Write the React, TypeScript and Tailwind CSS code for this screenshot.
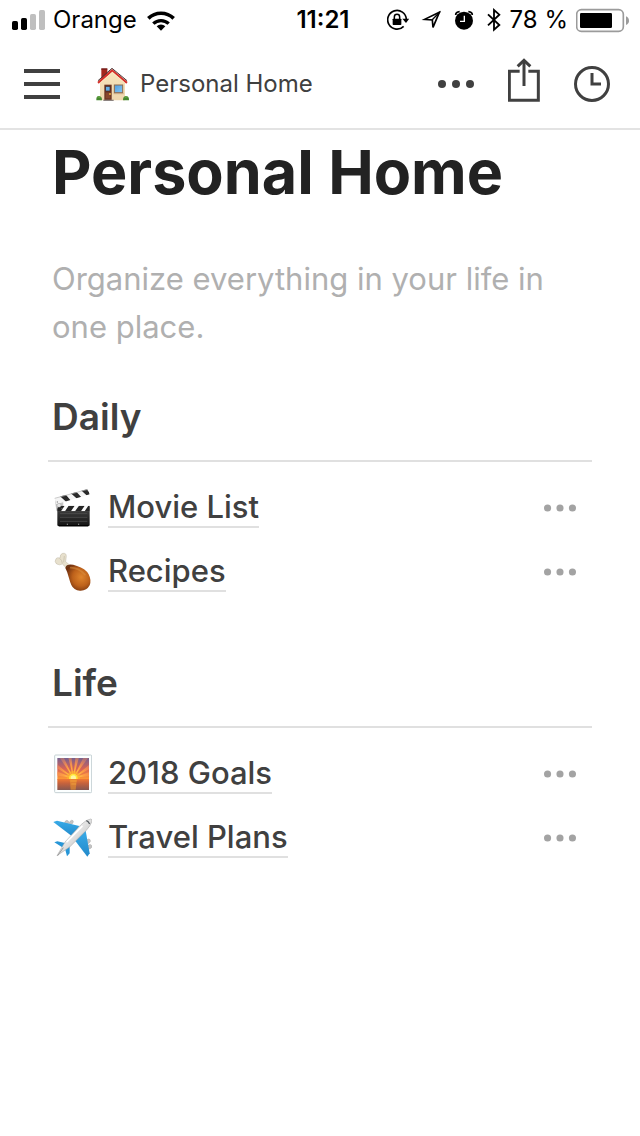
import type { ReactNode } from "react";

type Page = {
  title: string;
  icon: ReactNode;
};

type Section = {
  title: string;
  pages: Page[];
};

/* ---------- status bar icons ---------- */

function SignalIcon() {
  return (
    <svg viewBox="36 30 99 60" className="w-[33px] h-5">
      <rect x="36" y="63" width="18" height="27" rx="5" fill="#000" />
      <rect x="63" y="54" width="18" height="36" rx="5" fill="#000" />
      <rect x="90" y="42" width="18" height="48" rx="5" fill="#bfbfbf" />
      <rect x="117" y="30" width="18" height="60" rx="5" fill="#bfbfbf" />
    </svg>
  );
}

function WifiIcon() {
  return (
    <svg viewBox="441 28 84 63" className="w-7 h-[21px]">
      <path d="M483 90l-13-13a19 19 0 0 1 26 0z" fill="#000" />
      <g fill="none" stroke="#000" strokeWidth="10">
        <path d="M460 69a33 33 0 0 1 46 0" />
        <path d="M445 53a55 55 0 0 1 76 0" strokeWidth="11" />
      </g>
    </svg>
  );
}

function RotationLockIcon() {
  return (
    <svg viewBox="27 27 66 66" className="w-[22px] h-[22px]">
      <path d="M77 79A28 28 0 1 1 85 58" fill="none" stroke="#000" strokeWidth="5" />
      <path d="M73 56h21l-10 13z" fill="#000" />
      <rect x="44" y="56" width="26" height="19" rx="2" fill="#000" />
      <path d="M49 57v-6a8 8 0 0 1 16 0v6" fill="none" stroke="#000" strokeWidth="4.5" />
    </svg>
  );
}

function LocationIcon() {
  return (
    <svg viewBox="132 30 63 63" className="w-[21px] h-[21px]">
      <path
        d="M187 37L143 58l23 2 2 22z"
        fill="none"
        stroke="#000"
        strokeWidth="5"
        strokeLinejoin="miter"
      />
      <path d="M189 35L165 60" stroke="#000" strokeWidth="4" />
    </svg>
  );
}

function AlarmIcon() {
  return (
    <svg viewBox="229 30 60 60" className="w-5 h-5">
      <circle cx="259" cy="62" r="27" fill="#000" />
      <path d="M234 45q0-9 12-10M284 45q0-9-12-10" fill="none" stroke="#000" strokeWidth="5" />
      <path d="M260 47v17h-13" fill="none" stroke="#fff" strokeWidth="4" />
    </svg>
  );
}

function BluetoothIcon() {
  return (
    <svg viewBox="321 24 48 72" className="w-4 h-6">
      <path
        d="M327 43l34 32-16 14V30l16 14-34 32"
        fill="none"
        stroke="#000"
        strokeWidth="5.5"
      />
    </svg>
  );
}

function BatteryIcon() {
  return (
    <svg viewBox="588 24 174 75" className="w-[58px] h-[25px]">
      <rect x="590" y="29" width="140" height="65" rx="14" fill="#fff" stroke="#9b9b9b" strokeWidth="5" />
      <rect x="600" y="39" width="96" height="45" rx="4" fill="#000" />
      <path d="M738 49q9 4 9 13t-9 13z" fill="#9b9b9b" />
    </svg>
  );
}

/* ---------- header icons ---------- */

function MenuIcon() {
  return (
    <svg viewBox="0 0 36 30" className="w-9 h-[30px]" fill="currentColor">
      <rect y="0" width="36" height="4" />
      <rect y="13" width="36" height="4" />
      <rect y="26" width="36" height="4" />
    </svg>
  );
}

function DotsIcon({ className }: { className: string }) {
  return (
    <svg viewBox="0 0 36 8" className={className} fill="currentColor">
      <circle cx="4" cy="4" r="4" />
      <circle cx="18" cy="4" r="4" />
      <circle cx="32" cy="4" r="4" />
    </svg>
  );
}

function ShareIcon() {
  return (
    <svg viewBox="264 24 96 132" className="w-8 h-11" fill="none" stroke="currentColor" strokeWidth="9">
      <path d="M299 64H268V151H355V64H325" />
      <path d="M312 108V32" />
      <path d="M293 49l19-18 19 18" strokeWidth="9" />
    </svg>
  );
}

function ClockIcon() {
  return (
    <svg viewBox="462 48 108 108" className="w-9 h-9" fill="none" stroke="currentColor" strokeWidth="9">
      <circle cx="516" cy="102" r="49.5" />
      <path d="M516 69v33h27" />
    </svg>
  );
}

/* ---------- page icons ---------- */

function HouseIcon() {
  return (
    <svg viewBox="6 12 120 120" className="size-10 shrink-0">
      <defs>
        <linearGradient id="wall" x1="0" y1="0" x2="0" y2="1">
          <stop offset="0" stopColor="#f8e6bd" />
          <stop offset="1" stopColor="#eed6ad" />
        </linearGradient>
        <linearGradient id="pane" x1="0" y1="0" x2="1" y2="1">
          <stop offset="0" stopColor="#4e9ee0" />
          <stop offset="1" stopColor="#86c5f2" />
        </linearGradient>
      </defs>
      <path d="M34 26h18v24l-18 8z" fill="#a5281f" />
      <path d="M34 25h18v4H34z" fill="#6e1a17" />
      <path d="M30 64L67 31l38 33v57H30z" fill="url(#wall)" />
      <path d="M22 66L66 27l47 39-4 5-42-36-41 36z" fill="#d5322c" />
      <path d="M24 62L66 25l45 37" fill="none" stroke="#4b3937" strokeWidth="3" />
      <path d="M31 68l36-31 37 31" fill="none" stroke="#fff2cf" strokeWidth="2" />
      <rect x="43" y="74" width="22" height="46" fill="#6c3422" />
      <rect x="47" y="79" width="13" height="14" fill="#65aee6" stroke="#3e2724" strokeWidth="2" />
      <path d="M47 98h14v17H47z" fill="#87452b" />
      <circle cx="60" cy="102" r="3" fill="#e9b23f" />
      <rect x="73" y="75" width="25" height="23" fill="url(#pane)" stroke="#8a6b51" strokeWidth="3" />
      <path d="M71 101h30" stroke="#b99370" strokeWidth="2" />
      <path d="M40 121h31" stroke="#8c8380" strokeWidth="4" />
      <path d="M19 121q-1-14 9-13 8 1 8 13zM99 121q0-12 8-13 11 0 10 13z" fill="#45882f" />
      <path d="M23 113q3-5 8-1M104 113q4-5 8-1" fill="none" stroke="#76b54e" strokeWidth="3" />
    </svg>
  );
}

function ClapperIcon() {
  return (
    <svg viewBox="24 24 120 120" className="size-10 shrink-0">
      <defs>
        <linearGradient id="slate" x1="0" y1="0" x2="0" y2="1">
          <stop offset="0" stopColor="#484848" />
          <stop offset="1" stopColor="#121212" />
        </linearGradient>
        <clipPath id="topArm">
          <path d="M31 54L132 27l5 16L37 73z" />
        </clipPath>
        <clipPath id="lowArm">
          <path d="M40 77h97v17H40z" />
        </clipPath>
      </defs>
      <path d="M33 60l25 7-1 24-20 1z" fill="#c4c4c4" />
      <g clipPath="url(#topArm)">
        <path d="M28 20h115v60H28z" fill="#f4f4f4" />
        <path
          d="M45 46l22 20h17L63 41zM77 37l23 20h17L95 33zM108 28l22 20h15L125 24z"
          fill="#292929"
        />
      </g>
      <path d="M32 55L132 28" stroke="#b5b5b5" strokeWidth="2" />
      <rect x="40" y="78" width="97" height="61" rx="5" fill="url(#slate)" />
      <g clipPath="url(#lowArm)">
        <path d="M40 77h97v17H40z" fill="#fafafa" />
        <path d="M45 77h17L50 95H34zM74 77h18L80 95H62zM105 77h17l-12 18H92zM133 77h16l-12 18h-16z" fill="#252525" />
      </g>
      <path d="M48 101h82M48 112h82M48 124h82" stroke="#555" strokeWidth="2" />
      <path d="M70 131v7M104 131v7" stroke="#d1d1d1" strokeWidth="2" />
      <path d="M45 137h87" stroke="#000" strokeWidth="4" />
      <circle cx="45" cy="76" r="6" fill="#e4e4e4" stroke="#898989" />
      <circle cx="54" cy="86" r="2" fill="#777" />
      <circle cx="40" cy="66" r="2" fill="#888" />
    </svg>
  );
}

function DrumstickIcon() {
  return (
    <svg viewBox="24 30 120 120" className="size-10 shrink-0">
      <defs>
        <radialGradient id="meat" cx="0.63" cy="0.48" r="0.62">
          <stop offset="0" stopColor="#df852d" />
          <stop offset="0.55" stopColor="#bd611b" />
          <stop offset="1" stopColor="#70300f" />
        </radialGradient>
      </defs>
      <path
        d="M66 77L55 66q-9 5-17 0-8-7-2-16 4-5 12-2 0-12 8-14 11-2 11 9-1 9-2 16l12 10z"
        fill="#e7e0cd"
        stroke="#a89f88"
        strokeWidth="1"
      />
      <path d="M47 49q7 5 8 15M61 42l-2 19" fill="none" stroke="#cfc7b3" strokeWidth="3" />
      <path
        d="M64 78q2-10 12-10 8-1 23 4 25 7 35 25 9 18 3 33-9 17-29 16-19-1-26-17-4-9-8-24-3-14-10-27z"
        fill="url(#meat)"
      />
      <path d="M80 77q24 0 43 21" fill="none" stroke="#dc9142" strokeWidth="5" strokeLinecap="round" opacity="0.5" />
      <path d="M67 76l10-6" stroke="#6f3a1b" strokeWidth="4" />
    </svg>
  );
}

function SunriseIcon() {
  return (
    <svg viewBox="24 27 120 120" className="size-10 shrink-0">
      <defs>
        <linearGradient id="sky" x1="0" y1="0" x2="0" y2="1">
          <stop offset="0" stopColor="#75608f" />
          <stop offset="0.5" stopColor="#d76355" />
          <stop offset="1" stopColor="#ff9b32" />
        </linearGradient>
        <linearGradient id="sea" x1="0" y1="0" x2="0" y2="1">
          <stop offset="0" stopColor="#f07934" />
          <stop offset="0.4" stopColor="#c5623d" />
          <stop offset="1" stopColor="#865750" />
        </linearGradient>
        <radialGradient id="rays" gradientUnits="userSpaceOnUse" cx="88" cy="96" r="62">
          <stop offset="0" stopColor="#ffe94a" />
          <stop offset="0.5" stopColor="#ff9e43" />
          <stop offset="1" stopColor="#f48a5c" stopOpacity="0.4" />
        </radialGradient>
        <clipPath id="skyClip">
          <rect x="40" y="39" width="95" height="65" />
        </clipPath>
      </defs>
      <rect x="32" y="30" width="111" height="113" rx="3" fill="#fcffff" stroke="#c4d0d3" strokeWidth="3" />
      <rect x="40" y="39" width="95" height="65" fill="url(#sky)" />
      <g clipPath="url(#skyClip)">
        <path
          d="M88 99L30 90v-14zM88 99L30 64V50zM88 99L45 35h13zM88 99L71 30h11zM88 99L95 30h12zM88 99l32-65 12 5zM88 99l55-46v15zM88 99l55-20v13z"
          fill="url(#rays)"
        />
        <circle cx="88" cy="98" r="20" fill="#ffae31" opacity="0.7" />
        <circle cx="88" cy="99" r="13" fill="#ffe53b" />
        <circle cx="88" cy="99" r="8" fill="#fff6a2" />
      </g>
      <rect x="40" y="102" width="95" height="33" fill="url(#sea)" />
      <path d="M77 103h22l-4 31H80z" fill="#ed952d" opacity="0.6" />
      <path d="M79 108h19M82 117h14" stroke="#f7ac3f" strokeWidth="2" />
    </svg>
  );
}

function AirplaneIcon() {
  return (
    <svg viewBox="24 30 120 120" className="size-10 shrink-0">
      <defs>
        <linearGradient id="fuselage" x1="0" y1="0" x2="1" y2="1">
          <stop offset="0.25" stopColor="#fafafa" />
          <stop offset="0.55" stopColor="#dadada" />
          <stop offset="0.8" stopColor="#939393" />
        </linearGradient>
        <linearGradient id="wing" x1="0" y1="0" x2="0" y2="1">
          <stop offset="0" stopColor="#38abe8" />
          <stop offset="1" stopColor="#2389ca" />
        </linearGradient>
      </defs>
      <g stroke="#999" strokeWidth="1" fill="#c4c4c4">
        <ellipse cx="68" cy="44" rx="6" ry="7" transform="rotate(42 68 44)" />
        <ellipse cx="82" cy="43" rx="5" ry="7" transform="rotate(42 82 43)" />
        <ellipse cx="132" cy="100" rx="8" ry="6" transform="rotate(-38 132 100)" />
        <ellipse cx="137" cy="116" rx="7" ry="6" transform="rotate(-38 137 116)" />
      </g>
      <path d="M28 42l11-4 67 16-20 32z" fill="url(#wing)" />
      <path d="M90 94l35-26 12 68-7 10z" fill="url(#wing)" />
      <path d="M31 103l9-3 32 7-9 16zM62 118l15-4v22l-8 9z" fill="#2796d7" />
      <path
        d="M39 143l24-41 47-51q17-17 30-18 5 0 4 7-4 13-17 27L77 117z"
        fill="url(#fuselage)"
        stroke="#a1a1a1"
        strokeWidth="1.5"
      />
      <path d="M127 38q6 2 10 10" fill="none" stroke="#575d61" strokeWidth="4" />
      <path d="M58 119l-17 24" stroke="#9a9a9a" strokeWidth="3" />
      <path d="M69 101l45-46" stroke="#fff" strokeWidth="5" strokeLinecap="round" />
    </svg>
  );
}

const sections: Section[] = [
  {
    title: "Daily",
    pages: [
      { title: "Movie List", icon: <ClapperIcon /> },
      { title: "Recipes", icon: <DrumstickIcon /> },
    ],
  },
  {
    title: "Life",
    pages: [
      { title: "2018 Goals", icon: <SunriseIcon /> },
      { title: "Travel Plans", icon: <AirplaneIcon /> },
    ],
  },
];

function StatusBar() {
  return (
    <div className="grid grid-cols-[1fr_auto_1fr] items-center h-10 pl-3 pr-1.5 text-2xl text-black">
      <div className="flex items-center">
        <SignalIcon />
        <span className="ml-2 mr-2.5">Orange</span>
        <WifiIcon />
      </div>
      <span className="font-semibold">11:21</span>
      <div className="flex items-center justify-end">
        <RotationLockIcon />
        <span className="flex items-center gap-3 ml-3">
          <LocationIcon />
          <AlarmIcon />
          <BluetoothIcon />
        </span>
        <span className="mx-2 whitespace-nowrap">78 %</span>
        <BatteryIcon />
      </div>
    </div>
  );
}

function Header() {
  return (
    <header className="flex items-center h-[90px] pl-6 pr-[30px] border-b-2 border-[#e3e3e3] text-[#404040]">
      <button type="button" aria-label="Menu">
        <MenuIcon />
      </button>
      <div className="flex items-center gap-2 ml-8">
        <HouseIcon />
        <span className="text-2xl">Personal Home</span>
      </div>
      <div className="flex items-center ml-auto">
        <button type="button" aria-label="More">
          <DotsIcon className="w-9 h-2" />
        </button>
        <button type="button" aria-label="Share" className="ml-[34px] mb-2">
          <ShareIcon />
        </button>
        <button type="button" aria-label="Updates" className="ml-[34px]">
          <ClockIcon />
        </button>
      </div>
    </header>
  );
}

function PageRow({ title, icon }: Page) {
  return (
    <li className="flex items-center h-16 pl-1 pr-4">
      {icon}
      <a href="#" className="ml-4 border-b-2 border-[#e0e0e0] text-[31px] leading-[38px] font-medium">
        {title}
      </a>
      <button type="button" aria-label={`${title} options`} className="ml-auto text-[#a3a3a3]">
        <DotsIcon className="w-8 h-2" />
      </button>
    </li>
  );
}

function App() {
  return (
    <div className="min-h-screen bg-white font-['Inter','Liberation_Sans',sans-serif] text-[#404040]">
      <StatusBar />
      <Header />
      <main className="px-12 pt-1">
        <h1 className="pl-1 text-[61px] leading-[76px] font-bold text-[#222222]">Personal Home</h1>
        <p className="pl-1 pr-4 mt-[45px] text-[31px] leading-[48px] text-[#b0b0b0]">
          Organize everything in your life in one place.
        </p>
        {sections.map((section) => (
          <section key={section.title} className="pt-[42px] pb-[13px]">
            <h2 className="pl-1 pb-[19px] border-b-2 border-[#e0e0e0] text-[37px] leading-[48px] font-semibold">
              {section.title}
            </h2>
            <ul className="pt-3.5">
              {section.pages.map((page) => (
                <PageRow key={page.title} {...page} />
              ))}
            </ul>
          </section>
        ))}
      </main>
    </div>
  );
}

export default App;
